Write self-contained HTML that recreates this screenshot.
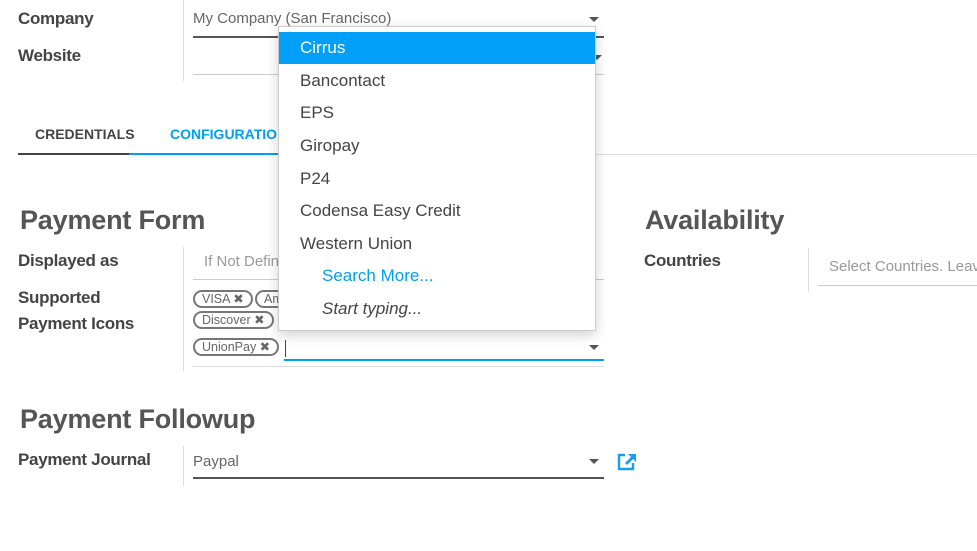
<!DOCTYPE html>
<html><head><meta charset="utf-8"><style>
*{margin:0;padding:0;box-sizing:border-box}
html,body{width:977px;height:551px;overflow:hidden}
body{background:#fff;font-family:"Liberation Sans",sans-serif;position:relative;color:#4c4c4c}
.a{position:absolute;white-space:nowrap}
.lbl{font-size:17px;font-weight:bold;color:#444;letter-spacing:-0.3px}
.h{font-size:27px;font-weight:bold;color:#555;letter-spacing:-0.2px}
.vl{position:absolute;width:1px;background:#ddd}
.hl{position:absolute;height:1px;background:#ccc}
.val{font-size:15px;color:#666}
.caret{position:absolute;width:0;height:0;border-left:5px solid transparent;border-right:5px solid transparent;border-top:5px solid #555}
.tag{position:absolute;height:18px;border:2px solid #777;border-radius:9px;font-size:12.5px;color:#666;padding:0 7px;line-height:14px}
.dd{position:absolute;left:278px;top:26px;width:318px;height:305px;background:#fff;border:1px solid #ccc;box-shadow:0 4px 12px rgba(0,0,0,.18)}
.it{position:absolute;left:0;width:316px;height:32px;font-size:17px;color:#444;padding-left:21px;line-height:32px}
</style></head><body>
<div class="a lbl" style="left:18px;top:9px">Company</div>
<div class="a lbl" style="left:18px;top:46px">Website</div>
<div class="vl" style="left:183px;top:0;height:81px"></div>
<div class="a val" style="left:193px;top:10px">My Company (San Francisco)</div>
<div class="hl" style="left:193px;top:36px;width:411px;height:2px;background:#555"></div>
<div class="caret" style="left:589px;top:17px"></div>
<div class="hl" style="left:193px;top:74px;width:411px;background:#ccc"></div>
<div class="caret" style="left:592px;top:55px"></div>

<div class="a" style="left:35px;top:126px;font-size:14px;font-weight:bold;color:#444">CREDENTIALS</div>
<div class="a" style="left:170px;top:126px;font-size:14px;font-weight:bold;color:#00a0f0">CONFIGURATION</div>
<div class="hl" style="left:18px;top:153px;width:111px;height:2px;background:#444"></div>
<div class="hl" style="left:129px;top:153px;width:170px;height:2px;background:#00a0f0"></div>
<div class="hl" style="left:595px;top:154px;width:382px;background:#ddd"></div>

<div class="a h" style="left:20px;top:205px">Payment Form</div>
<div class="a h" style="left:645px;top:205px">Availability</div>
<div class="a lbl" style="left:18px;top:251px">Displayed as</div>
<div class="a lbl" style="left:18px;top:288px">Supported</div>
<div class="a lbl" style="left:18px;top:314px">Payment Icons</div>
<div class="vl" style="left:183px;top:247px;height:124px"></div>
<div class="a val" style="left:204px;top:253px;color:#999">If Not Defined</div>
<div class="hl" style="left:193px;top:279px;width:411px;background:#ccc"></div>
<div class="tag" style="left:193px;top:290px">VISA ✖</div>
<div class="tag" style="left:255px;top:290px">Amex ✖</div>
<div class="tag" style="left:193px;top:311px">Discover ✖</div>
<div class="tag" style="left:193px;top:338px">UnionPay ✖</div>
<div class="vl" style="left:285px;top:340px;height:17px;background:#444"></div>
<div class="hl" style="left:284px;top:359px;width:320px;height:2px;background:#00a0f0"></div>
<div class="caret" style="left:589px;top:345px"></div>
<div class="hl" style="left:193px;top:366px;width:411px;background:#ddd"></div>

<div class="a lbl" style="left:644px;top:251px">Countries</div>
<div class="vl" style="left:808px;top:248px;height:44px"></div>
<div class="a" style="left:818px;top:250px;width:159px;height:40px;overflow:hidden">
<div class="a val" style="left:11px;top:8px;color:#999">Select Countries. Leave empty</div>
<div class="hl" style="left:0;top:35px;width:159px;background:#ccc"></div>
</div>

<div class="a h" style="left:20px;top:404px">Payment Followup</div>
<div class="a lbl" style="left:18px;top:450px">Payment Journal</div>
<div class="vl" style="left:183px;top:446px;height:40px"></div>
<div class="a val" style="left:193px;top:453px">Paypal</div>
<div class="hl" style="left:193px;top:477px;width:411px;height:2px;background:#555"></div>
<div class="caret" style="left:589px;top:459px"></div>
<svg class="a" style="left:616px;top:452px" width="22" height="20" viewBox="0 0 22 20"><path d="M9 3H3v14h14v-6" fill="none" stroke="#1a9ff0" stroke-width="2.4"/><path d="M12 2h8v8l-3-3-6 6-2-2 6-6z" fill="#1a9ff0"/></svg>

<div class="dd">
<div class="it" style="top:5px;background:#00a0f8;color:#fff">Cirrus</div>
<div class="it" style="top:38px">Bancontact</div>
<div class="it" style="top:70px">EPS</div>
<div class="it" style="top:103px">Giropay</div>
<div class="it" style="top:136px">P24</div>
<div class="it" style="top:168px">Codensa Easy Credit</div>
<div class="it" style="top:201px">Western Union</div>
<div class="it" style="top:233px;padding-left:43px;color:#00a0f0">Search More...</div>
<div class="it" style="top:266px;padding-left:43px;font-style:italic">Start typing...</div>
</div>
</body></html>
